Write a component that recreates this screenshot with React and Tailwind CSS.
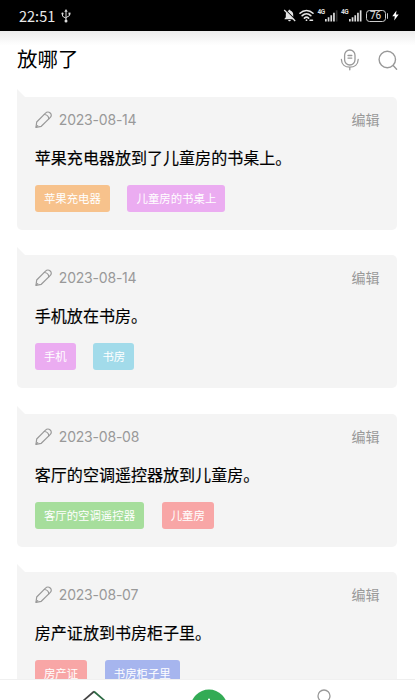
import React from 'react';

const notes = [
  {
    date: '2023-08-14',
    text: '苹果充电器放到了儿童房的书桌上。',
    tags: [
      { label: '苹果充电器', color: 'bg-[#f7c28c]' },
      { label: '儿童房的书桌上', color: 'bg-[#ebacf1]' },
    ],
  },
  {
    date: '2023-08-14',
    text: '手机放在书房。',
    tags: [
      { label: '手机', color: 'bg-[#ebacf1]' },
      { label: '书房', color: 'bg-[#a2dbea]' },
    ],
  },
  {
    date: '2023-08-08',
    text: '客厅的空调遥控器放到儿童房。',
    tags: [
      { label: '客厅的空调遥控器', color: 'bg-[#a6de9c]' },
      { label: '儿童房', color: 'bg-[#f8a6a6]' },
    ],
  },
  {
    date: '2023-08-07',
    text: '房产证放到书房柜子里。',
    tags: [
      { label: '房产证', color: 'bg-[#f8a6a6]' },
      { label: '书房柜子里', color: 'bg-[#a6b5ee]' },
    ],
  },
];

const UsbIcon = () => (
  <svg width="10" height="14" viewBox="0 0 10 14" fill="none" stroke="#ddd" strokeWidth="1">
    <path d="M5 2v10M1.5 5v2.2L5 9.3M8.5 5v1.6L5 8.6" />
    <path d="M5 0l1.7 2.7H3.3z" fill="#ddd" stroke="none" />
    <circle cx="5" cy="12" r="1.5" fill="#ddd" stroke="none" />
    <circle cx="1.5" cy="4.7" r="1.1" fill="#ddd" stroke="none" />
    <path d="M7.5 3.6h2v2h-2z" fill="#ddd" stroke="none" />
  </svg>
);

const BellOffIcon = () => (
  <svg width="13" height="13" viewBox="0 0 13 13">
    <path d="M6.5.8c.7 0 1 .5 1 1C9.4 2.3 10.2 3.8 10.2 5.5v2.7l1.3 1.5v.6H1.5v-.6l1.3-1.5V5.5C2.8 3.8 3.7 2.3 5.5 1.8c0-.5.3-1 1-1zM5.2 11h2.6c0 .8-.6 1.3-1.3 1.3S5.2 11.8 5.2 11z" fill="#e5e5e5" />
    <path d="M2.2 .6l10.6 10.6" stroke="#000" strokeWidth="1.1" />
    <path d="M1.2 1l11 11" stroke="#e5e5e5" strokeWidth="1.2" />
  </svg>
);

const WifiIcon = () => (
  <svg width="15" height="13" viewBox="0 0 15 13" fill="none" stroke="#e5e5e5" strokeWidth="1.6" strokeLinecap="round">
    <path d="M1 4.2c3.7-3.7 9.3-3.7 13 0M3.2 6.7c2.5-2.4 6.1-2.4 8.6 0M5.4 9.1c1.3-1.2 2.9-1.2 4.2 0" />
    <circle cx="7.5" cy="11.2" r=".9" fill="#e5e5e5" stroke="none" />
    <path d="M11 11.2h2.5" strokeWidth="1.5" />
  </svg>
);

const Signal = ({ full }) => (
  <div className="flex items-start">
    <span className="font-['Roboto'] text-[6.5px] leading-[7px] font-bold tracking-[-0.3px] text-[#ddd]">4G</span>
    <svg width="13" height="13" viewBox="0 0 13 13" fill="#ddd">
      <path d="M0 10h1.7v2.5H0zM2.7 8.3h1.7v4.2H2.7zM5.4 6.2h1.7v6.3H5.4zM8.1 3.8h1.7v8.7H8.1z" />
      <path d="M10.8 1.3h1.7v11.2h-1.7z" fill={full ? '#ddd' : '#333'} />
    </svg>
  </div>
);

const Battery = () => (
  <div className="flex items-center gap-px">
    <span className="flex h-[12px] w-[20px] items-center justify-center rounded-[3.5px] border border-[#ccc] font-['Roboto'] text-[10px] leading-none text-[#e5e5e5]">76</span>
    <span className="h-[6px] w-[1.5px] rounded-r bg-[#ccc]" />
    <svg className="ml-[3px]" width="7" height="11" viewBox="0 0 7 10" fill="#fff">
      <path d="M4.5 0L.3 5.8h2.5L2.2 10 6.7 4H4z" />
    </svg>
  </div>
);

const MicIcon = () => (
  <svg width="20" height="22" viewBox="0 0 20 22" fill="none" stroke="#999" strokeWidth="1.3" strokeLinecap="round">
    <rect x="4.6" y="1" width="10.4" height="15" rx="5.2" />
    <path d="M1.4 10.5c.2 5 3.8 7.7 8.4 7.7s8.2-2.7 8.4-7.7M9.8 18.2v2.6M8 6.5h3.8M8 9.1h3.8" />
  </svg>
);

const SearchIcon = () => (
  <svg width="20" height="21" viewBox="0 0 20 21" fill="none" stroke="#999" strokeWidth="1.4" strokeLinecap="round">
    <circle cx="9.3" cy="9.5" r="8.2" />
    <path d="M15.2 15.6l3.4 3.6" />
  </svg>
);

const PencilIcon = () => (
  <svg width="18" height="18" viewBox="0 0 18 18" fill="none" stroke="#999" strokeWidth="1.2" strokeLinejoin="round" strokeLinecap="round">
    <path d="M1 16.3l.7-5.3L10.5 2.2c1.5-1.7 3.3-1.5 4.7-.2s1.5 3-.1 4.6L6.3 15.3z" />
    <path d="M9.3 3.5c2.6.2 4.3 1.9 4.5 4.3M1.1 16.2l1.6-1.6" />
  </svg>
);

const NoteCard = ({ note }) => (
  <div className="relative h-[133px] shrink-0 rounded-[5px] rounded-tl-none bg-[#f4f4f4] px-[17.5px] pt-[13px]">
    <svg className="absolute -top-2 left-0" width="9" height="9" viewBox="0 0 9 9" fill="#f4f4f4">
      <path d="M0 0l8.5 8.5H0z" />
    </svg>
    <div className="flex h-[20px] items-center">
      <PencilIcon />
      <span className="ml-[6px] font-['Inter','Noto_Sans_CJK_SC',sans-serif] text-[14px] leading-5 tracking-[-0.2px] text-[#999]">{note.date}</span>
      <span className="mb-[2px] ml-auto text-[14px] leading-5 text-[#999]">编辑</span>
    </div>
    <p className="mt-[15px] h-6 text-[16.05px] leading-6 whitespace-nowrap text-black [-webkit-text-stroke:0.15px_#000]">{note.text}</p>
    <div className="mt-[16px] flex gap-[17.5px]">
      {note.tags.map((tag) => (
        <span key={tag.label} className={`h-[27px] rounded-[3px] px-[9.1px] text-[11.4px] leading-[27px] whitespace-nowrap text-white ${tag.color}`}>
          {tag.label}
        </span>
      ))}
    </div>
  </div>
);

const TabBar = () => (
  <nav className="absolute inset-x-0 bottom-0 flex h-[21px] justify-center overflow-hidden border-t border-[#f0f0f0] bg-white pl-[2px]">
    <div className="flex w-[115px] justify-center">
      <svg className="mt-[10px]" width="26" height="22" viewBox="0 0 26 22" fill="none" strokeWidth="1.7">
        <path d="M2 11L13 1.5" stroke="#444" />
        <path d="M13 1.5L24 11" stroke="#2b6a42" />
      </svg>
    </div>
    <div className="flex w-[115px] justify-center">
      <svg className="mt-[9px] shrink-0" width="38" height="38" viewBox="0 0 38 38">
        <circle cx="19" cy="19" r="18.5" fill="#33ab55" />
        <path d="M19 10.5v17M10.5 19h17" stroke="#fff" strokeWidth="2" strokeLinecap="round" />
      </svg>
    </div>
    <div className="flex w-[115px] justify-center">
      <svg className="mt-[9px]" width="26" height="24" viewBox="0 0 26 24" fill="none" stroke="#999" strokeWidth="1.3">
        <circle cx="13" cy="7" r="6" />
        <path d="M2 23c1-6 6-9 11-9s10 3 11 9" />
      </svg>
    </div>
  </nav>
);

export default function App() {
  return (
    <div className="relative flex h-[700px] w-[415px] flex-col overflow-hidden bg-white font-['Noto_Sans_CJK_SC',sans-serif]">
      <div className="flex h-[31px] shrink-0 items-center bg-black pr-[16px] pl-[19px]">
        <span className="mr-[6px] text-[14.5px] leading-5 text-[#e8e8e8]">22:51</span>
        <UsbIcon />
        <div className="ml-auto flex items-center">
          <BellOffIcon />
          <span className="ml-[3px] flex"><WifiIcon /></span>
          <span className="ml-[3px]"><Signal /></span>
          <span className="ml-[3px]"><Signal full /></span>
          <span className="ml-[4px]"><Battery /></span>
        </div>
      </div>

      <header className="flex h-[58px] shrink-0 items-center bg-gradient-to-b from-[#ededed] to-white to-25% pr-[17px] pl-[17px]">
        <h1 className="mb-[4px] text-[20.5px] leading-7 text-black">放哪了</h1>
        <span className="ml-auto"><MicIcon /></span>
        <span className="ml-[18px]"><SearchIcon /></span>
      </header>

      <main className="flex flex-1 flex-col gap-[25.3px] overflow-hidden pt-[8px] pr-[18px] pl-[17.3px]">
        {notes.map((note, i) => (
          <NoteCard key={i} note={note} />
        ))}
      </main>

      <TabBar />
    </div>
  );
}
